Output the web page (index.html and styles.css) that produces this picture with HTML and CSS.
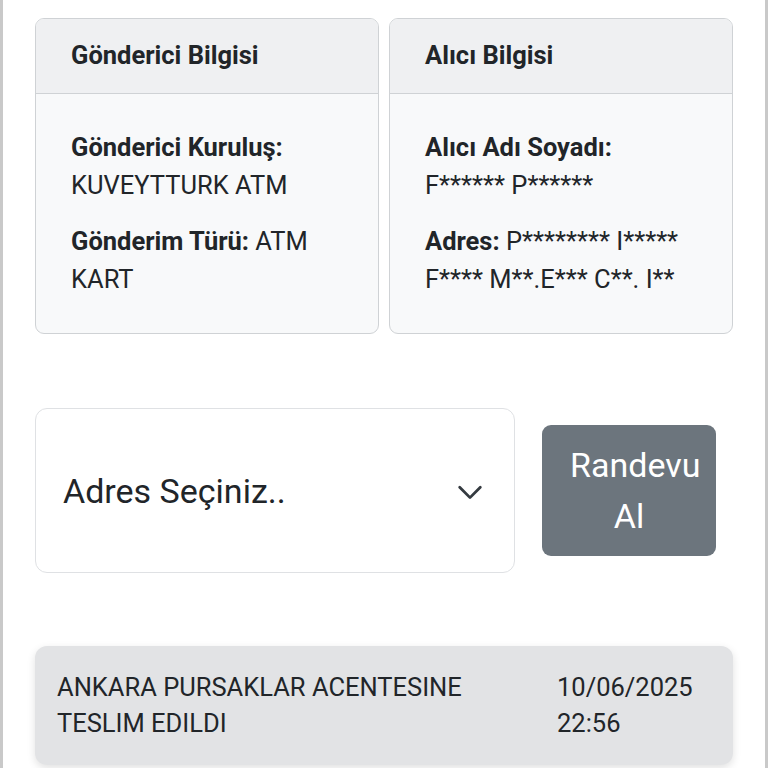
FILE: index.html
```html
<!DOCTYPE html>
<html lang="tr">
<head>
  <meta charset="UTF-8">
  <meta name="viewport" content="width=device-width, initial-scale=1.0">
  <title>Gönderi Takip</title>
  <link rel="stylesheet" href="styles.css">
</head>
<body>
  <div class="page">

    <!-- Sender / receiver cards -->
    <div class="info-grid">
      <div class="info-card">
        <div class="info-header">Gönderici Bilgisi</div>
        <div class="info-body">
          <p><b>Gönderici Kuruluş:</b> KUVEYTTURK ATM</p>
          <p><b>Gönderim Türü:</b> ATM KART</p>
        </div>
      </div>
      <div class="info-card">
        <div class="info-header">Alıcı Bilgisi</div>
        <div class="info-body">
          <p><b>Alıcı Adı Soyadı:</b> F****** P******</p>
          <p><b>Adres:</b> P******** I***** F**** M**.E*** C**. I**</p>
        </div>
      </div>
    </div>

    <!-- Address select + appointment button -->
    <div class="appointment-row">
      <div class="address-select">
        <span>Adres Seçiniz..</span>
        <svg class="chevron" viewBox="0 0 16 16" width="30" height="30">
          <path d="M2.5 5.5l5.5 5.5 5.5-5.5" fill="none" stroke="#343a40" stroke-width="1.5" stroke-linecap="round" stroke-linejoin="round"/>
        </svg>
      </div>
      <button class="btn-appointment">Randevu Al</button>
    </div>

    <!-- Tracking history -->
    <div class="history-card">
      <div class="history-text">ANKARA PURSAKLAR ACENTESINE TESLIM EDILDI</div>
      <div class="history-date">10/06/2025 22:56</div>
    </div>

  </div>
</body>
</html>
```

FILE: styles.css
```css
html, body {
  margin: 0;
  padding: 0;
  background: #fff;
}

body {
  font-family: Roboto, "Noto Sans", sans-serif;
  color: #212529;
}

.page {
  box-sizing: border-box;
  width: 768px;
  height: 768px;
  overflow: hidden;
  border-left: 3px solid #c9c9c9;
  border-right: 3px solid #c9c9c9;
  padding: 18px 32px 0;
}

/* Info cards */
.info-grid {
  display: grid;
  grid-template-columns: 344px 344px;
  gap: 10px;
}

.info-card {
  border: 1px solid #cfd2d5;
  border-radius: 9px;
  background: #f8f9fa;
  overflow: hidden;
}

.info-header {
  height: 75px;
  box-sizing: border-box;
  padding: 18px 35px 0;
  background: #eff0f2;
  border-bottom: 1px solid #cfd2d5;
  font-size: 25.5px;
  font-weight: bold;
  line-height: 37px;
}

.info-body {
  padding: 35px 35px 35px;
  font-size: 25.5px;
  line-height: 37.5px;
}

.info-body p {
  margin: 0 0 19px;
}

.info-body p:last-child {
  margin-bottom: 0;
}

/* Address select row */
.appointment-row {
  display: flex;
  align-items: center;
  gap: 27px;
  margin-top: 74px;
}

.address-select {
  box-sizing: border-box;
  width: 480px;
  height: 165px;
  display: flex;
  align-items: center;
  justify-content: space-between;
  padding: 0 29px 0 27px;
  background: #fff;
  border: 1px solid #dfe1e4;
  border-radius: 12px;
  font-size: 34px;
}

.chevron {
  display: block;
  margin-top: 2px;
}

.btn-appointment {
  box-sizing: border-box;
  width: 174px;
  height: 131px;
  padding: 0 28px;
  border: none;
  border-radius: 9px;
  background: #6c757d;
  color: #fff;
  font-family: Roboto, "Noto Sans", sans-serif;
  font-size: 34px;
  line-height: 51px;
  text-align: center;
}

/* History */
.history-card {
  display: grid;
  grid-template-columns: 1fr 154px;
  margin-top: 73px;
  padding: 23px 22px 24px;
  background: #e2e3e5;
  border-radius: 12px;
  box-shadow: 0 3px 8px rgba(0, 0, 0, 0.12);
  font-size: 25.5px;
  line-height: 36px;
}

.history-text {
  padding-right: 30px;
}
```
